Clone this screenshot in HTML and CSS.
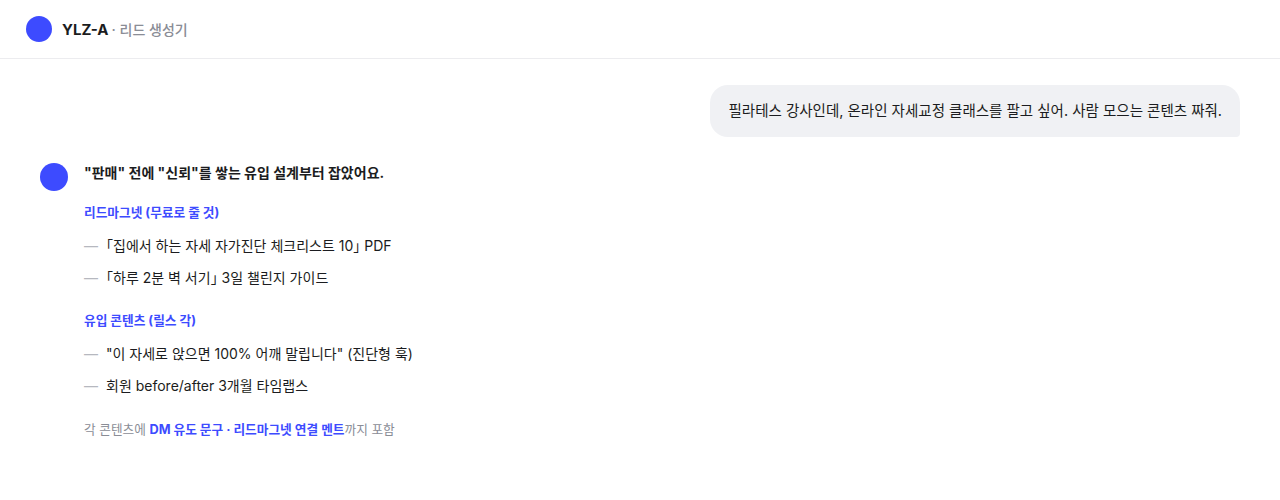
FILE: index.html
```html
<!DOCTYPE html>
<html lang="ko">
<head>
<meta charset="utf-8">
<link rel="stylesheet" href="styles.css">
</head>
<body>
<header class="topbar">
  <span class="logo"></span>
  <span class="brand">YLZ-A</span>
  <span class="sub">· 리드 생성기</span>
</header>
<main class="chat">
  <div class="row-user">
    <div class="bubble">필라테스 강사인데, 온라인 자세교정 클래스를 팔고 싶어. 사람 모으는 콘텐츠 짜줘.</div>
  </div>
  <div class="row-bot">
    <span class="avatar"></span>
    <div class="answer">
      <p class="lead">"판매" 전에 "신뢰"를 쌓는 유입 설계부터 잡았어요.</p>
      <p class="label">리드마그넷 (무료로 줄 것)</p>
      <ul class="items">
        <li><span class="dash">—</span><span><span class="br">「</span>집에서 하는 자세 자가진단 체크리스트 10<span class="br">」</span> PDF</span></li>
        <li><span class="dash">—</span><span><span class="br">「</span>하루 2분 벽 서기<span class="br">」</span> 3일 챌린지 가이드</span></li>
      </ul>
      <p class="label">유입 콘텐츠 (릴스 각)</p>
      <ul class="items">
        <li><span class="dash">—</span><span>"이 자세로 앉으면 100% 어깨 말립니다" (진단형 훅)</span></li>
        <li><span class="dash">—</span><span>회원 before/after 3개월 타임랩스</span></li>
      </ul>
      <p class="note">각 콘텐츠에 <b>DM 유도 문구 · 리드마그넷 연결 멘트</b>까지 포함</p>
    </div>
  </div>
</main>
</body>
</html>
```
FILE: styles.css
```css
* { box-sizing: border-box; }
html, body { margin: 0; padding: 0; background: #fff; }
body {
  font-family: Inter, "Noto Sans CJK KR", sans-serif;
  color: #1b1c20;
}
.topbar {
  height: 59px;
  border-bottom: 1px solid #ececef;
  display: flex;
  align-items: center;
  padding-left: 26px;
}
.logo {
  width: 26px; height: 26px; border-radius: 50%;
  background: #3d4bff;
  margin-right: 10px;
}
.brand { font-weight: 700; font-size: 15px; color: #1b1c20; }
.sub { font-size: 14px; color: #8a8d96; margin-left: 3px; font-weight: 500; }
.chat { padding: 26px 40px 0 40px; }
.row-user { display: flex; justify-content: flex-end; }
.bubble {
  background: #f0f1f4;
  border-radius: 18px 18px 4px 18px;
  padding: 16px 18px;
  font-size: 14.5px;
  line-height: 20px;
  color: #1b1c20;
}
.row-bot { display: flex; margin-top: 26px; }
.avatar {
  width: 28px; height: 28px; border-radius: 50%;
  background: #3d4bff; flex: none;
  margin-right: 16px;
}
.lead { margin: 0; font-size: 14px; font-weight: 700; line-height: 20px; }
.label { margin: 20px 0 0; font-size: 12.7px; font-weight: 700; color: #3d4bff; line-height: 20px; }
.items { list-style: none; margin: 13px 0 0; padding: 0; }
.items li { font-size: 14px; line-height: 20px; height: 20px; margin-bottom: 12px; display: flex; }
.items li:last-child { margin-bottom: 0; }
.dash { color: #b6b8bf; width: 22px; flex: none; }
.br { font-feature-settings: "halt"; font-family: "Noto Sans CJK KR", sans-serif; line-height: 1; }
.items + .label { margin-top: 23px; }
.note { margin: 24px 0 0; font-size: 12.7px; color: #8a8d96; line-height: 20px; }
.note b { color: #3d4bff; font-weight: 700; }
```
